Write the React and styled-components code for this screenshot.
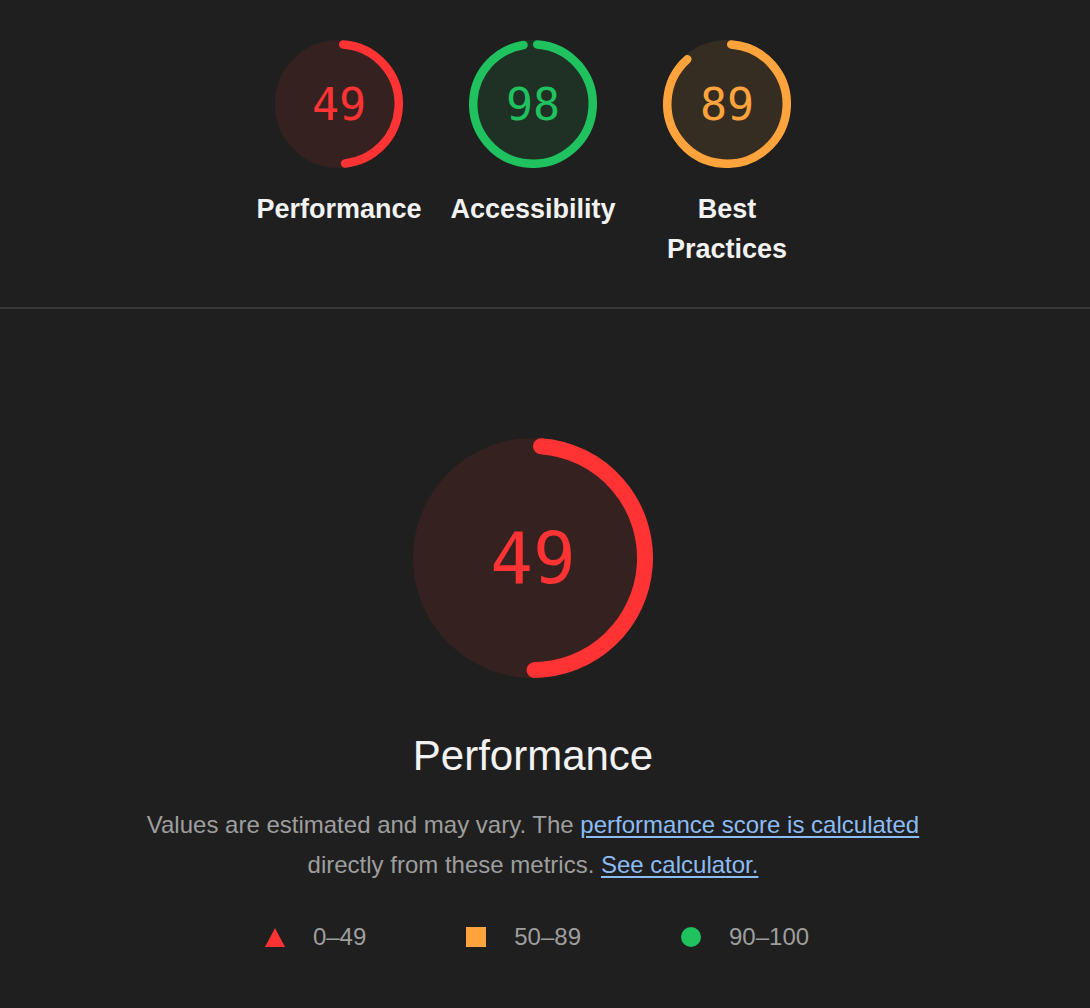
import React from 'react';
import styled, { createGlobalStyle } from 'styled-components';

const GlobalStyle = createGlobalStyle`
    html, body {
        margin: 0;
        padding: 0;
        background: #1f1f1f;
    }
    body {
        font-family: 'Liberation Sans', Arial, Helvetica, sans-serif;
        color: #eeeeee;
        -webkit-font-smoothing: antialiased;
    }
`;

const COLORS = {
    fail: '#ff3333',
    average: '#ffa43c',
    pass: '#1fc25e',
};

const colorFor = (score) =>
    score >= 90 ? COLORS.pass : score >= 50 ? COLORS.average : COLORS.fail;

// arc starts just after 12 o'clock so the round cap sits on the top,
// and stops a little early so the cap doesn't overshoot the score
const arcProps = (percent, trim) => {
    const r = 56;
    const strokeWidth = 8;
    const circumference = 2 * Math.PI * r;
    const adjust = (strokeWidth / 2 / circumference) * 360;
    let length = percent * circumference - trim;
    if (percent === 1) length = circumference;
    return {
        transform: `rotate(${-90 + adjust} 60 60)`,
        strokeDasharray: `${Math.max(length, 0)} ${circumference}`,
    };
};

const Gauge = ({ score, size, fontSize, trim }) => {
    const color = colorFor(score);
    return (
        <GaugeBox $size={size}>
            <svg viewBox='0 0 120 120' width={size} height={size}>
                <circle
                    cx='60'
                    cy='60'
                    r='56'
                    strokeWidth='8'
                    fill={color}
                    stroke={color}
                    opacity='0.1'
                />
                <circle
                    cx='60'
                    cy='60'
                    r='56'
                    strokeWidth='8'
                    fill='none'
                    stroke={color}
                    strokeLinecap='round'
                    {...arcProps(score / 100, trim)}
                />
            </svg>
            <GaugeNumber $color={color} $fontSize={fontSize}>
                {score}
            </GaugeNumber>
        </GaugeBox>
    );
};

const App = () => {
    const scores = [
        { title: 'Performance', score: 49 },
        { title: 'Accessibility', score: 98 },
        { title: 'Best Practices', score: 89 },
    ];

    return (
        <Page>
            <GlobalStyle />
            <Summary>
                {scores.map((s) => (
                    <GaugeWrapper key={s.title}>
                        <Gauge
                            score={s.score}
                            size={128}
                            fontSize={45}
                            trim={6.5}
                        />
                        <GaugeLabel>{s.title}</GaugeLabel>
                    </GaugeWrapper>
                ))}
            </Summary>

            <Divider />

            <Category>
                <Gauge score={49} size={240} fontSize={71} trim={1.5} />
                <CategoryTitle>Performance</CategoryTitle>
                <Description>
                    Values are estimated and may vary. The{' '}
                    <a href='#score'>performance score is calculated</a>{' '}
                    directly from these metrics.{' '}
                    <a href='#calculator'>See calculator.</a>
                </Description>

                <Legend>
                    <LegendItem>
                        <Triangle />
                        <span>0–49</span>
                    </LegendItem>
                    <LegendItem>
                        <Square />
                        <span>50–89</span>
                    </LegendItem>
                    <LegendItem>
                        <Dot />
                        <span>90–100</span>
                    </LegendItem>
                </Legend>
            </Category>
        </Page>
    );
};

const Page = styled.div`
    width: 1090px;
    min-height: 1008px;
    background: #1f1f1f;
`;

const Summary = styled.div`
    width: 1066px;
    display: flex;
    justify-content: center;
    gap: 22px;
    padding: 40px 0 38px;
`;

const GaugeWrapper = styled.div`
    width: 172px;
    display: flex;
    flex-direction: column;
    align-items: center;
`;

const GaugeBox = styled.div`
    display: grid;
    place-items: center;
    width: ${(p) => p.$size}px;
    height: ${(p) => p.$size}px;

    svg,
    span {
        grid-area: 1 / 1;
    }
    svg {
        display: block;
    }
`;

const GaugeNumber = styled.span`
    font-family: 'DejaVu Sans Mono', Menlo, monospace;
    font-size: ${(p) => p.$fontSize}px;
    line-height: 1;
    color: ${(p) => p.$color};
`;

const GaugeLabel = styled.div`
    margin-top: 21px;
    font-size: 27px;
    font-weight: 700;
    line-height: 40px;
    text-align: center;
    color: #f2f2f2;
`;

const Divider = styled.hr`
    margin: 0;
    border: none;
    height: 2px;
    background: #383838;
`;

const Category = styled.section`
    width: 1066px;
    padding-top: 129px;
    display: flex;
    flex-direction: column;
    align-items: center;
`;

const CategoryTitle = styled.h2`
    margin: 53px 0 0;
    font-size: 42px;
    font-weight: 400;
    line-height: 50px;
    color: #f2f2f2;
`;

const Description = styled.p`
    margin: 24px 0 0;
    max-width: 790px;
    font-size: 24px;
    line-height: 40px;
    text-align: center;
    color: #9e9e9e;

    a {
        color: #8cbcf5;
        text-decoration: underline;
        text-underline-offset: 3px;
    }
`;

const Legend = styled.div`
    margin-top: 32px;
    padding-left: 8px;
    display: flex;
    gap: 100px;
    height: 40px;
    align-items: center;
`;

const LegendItem = styled.div`
    display: flex;
    align-items: center;
    gap: 28px;
    font-size: 24px;
    color: #9e9e9e;
`;

const Triangle = styled.i`
    width: 0;
    height: 0;
    border-left: 10px solid transparent;
    border-right: 10px solid transparent;
    border-bottom: 19px solid ${COLORS.fail};
`;

const Square = styled.i`
    width: 20px;
    height: 20px;
    background: ${COLORS.average};
`;

const Dot = styled.i`
    width: 20px;
    height: 20px;
    border-radius: 50%;
    background: ${COLORS.pass};
`;

export default App;
